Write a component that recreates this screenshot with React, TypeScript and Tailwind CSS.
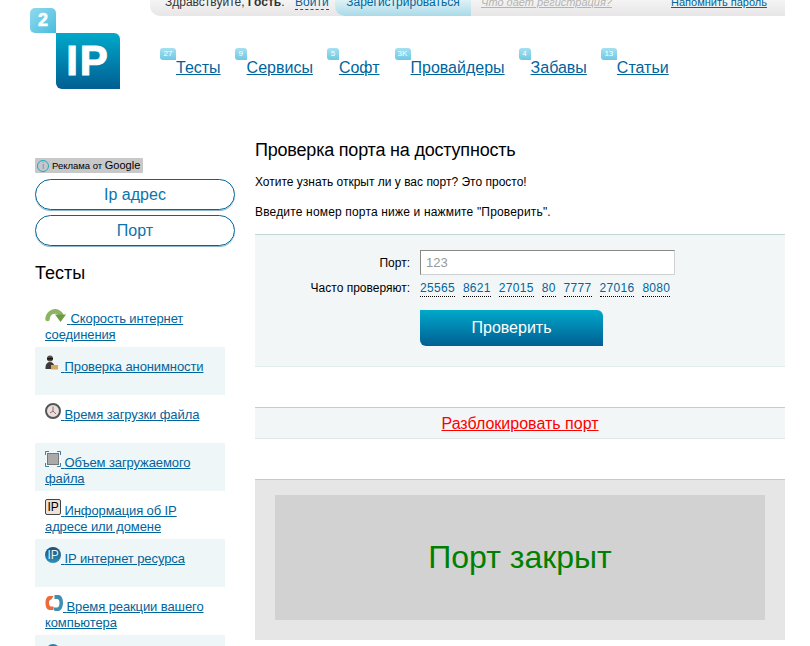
import type { ReactNode } from 'react';

const navItems = [
  { count: '27', label: 'Тесты', badge: 'w-4', extra: '' },
  { count: '9', label: 'Сервисы', badge: 'w-3', extra: '' },
  { count: '5', label: 'Софт', badge: 'w-3', extra: 'mr-px' },
  { count: '3K', label: 'Провайдеры', badge: 'w-4', extra: '' },
  { count: '4', label: 'Забавы', badge: 'w-3', extra: '' },
  { count: '13', label: 'Статьи', badge: 'w-4', extra: '' },
];

const ports = ['25565', '8621', '27015', '80', '7777', '27016', '8080'];

function ArrowIcon() {
  return (
    <svg width="22" height="16" viewBox="0 0 22 16" className="inline-block align-baseline">
      <path d="M2.5 12C3 6 10 1 16 7.5" stroke="#8db463" strokeWidth="4.5" fill="none" strokeLinecap="round" />
      <path d="M10 7.5h11l-5.5 7.5z" fill="#6f9a45" />
    </svg>
  );
}

function AgentIcon() {
  return (
    <svg width="16" height="16" viewBox="0 0 16 16" className="inline-block align-baseline">
      <circle cx="5" cy="3.5" r="3" fill="#5a4c46" />
      <rect x="2" y="3" width="6" height="1.5" fill="#111" />
      <path d="M0.5 12c0-3 2-5 4.5-5s4.5 2 4.5 5v2h-9z" fill="#3f3a38" />
      <rect x="6" y="10" width="7" height="4.5" fill="#d8a860" />
    </svg>
  );
}

function ClockIcon() {
  return (
    <svg width="16" height="16" viewBox="0 0 16 16" className="inline-block align-baseline">
      <circle cx="8" cy="8" r="7" fill="#e4e0e0" stroke="#555" strokeWidth="2" />
      <path d="M8 3.5V8l3 3M8 8l-3 2" stroke="#b06060" strokeWidth="1" fill="none" />
    </svg>
  );
}

function SizeIcon() {
  return (
    <svg width="16" height="16" viewBox="0 0 16 16" className="inline-block align-baseline">
      <rect x="2.5" y="2.5" width="11" height="11" fill="#aaa" stroke="#777" />
      <path d="M0.5 4V.5H4M12 .5h3.5V4M15.5 12v3.5H12M4 15.5H.5V12" stroke="#3f7f9f" fill="none" />
    </svg>
  );
}

function IpBoxIcon() {
  return (
    <span className="inline-block overflow-hidden w-4 h-4 align-baseline border border-[#444] rounded-[2px] bg-[#eee2d8] text-black text-[12px] leading-[14px] text-center">
      IP
    </span>
  );
}

function IpGlobeIcon() {
  return (
    <span className="inline-block overflow-hidden w-4 h-4 align-baseline rounded-full bg-gradient-to-b from-[#1c4f78] to-[#2f8fb5] text-[#dff1f6] text-[12px] leading-4 text-center">
      IP
    </span>
  );
}

function PingIcon() {
  return (
    <svg width="18" height="16" viewBox="0 0 18 16" className="inline-block align-baseline">
      <path d="M8.500 1H4.500C2 1 .5 4 .5 8s1.500 7 4 7h4v-3.500H6c-1.200 0-2-1.500-2-3.500s.8-3.500 2.500-3.500z" fill="#ee6a3a" />
      <path d="M9.500 0h4c2.500 0 4.500 3 4.500 7.500s-2 8.500-4.500 8.500h-4l-1-3.500h3.500c1.500 0 2.500-2 2.500-4.500s-1-4-2.500-4H9.500z" fill="#3f8fb0" />
    </svg>
  );
}

function GearIcon() {
  return (
    <svg width="16" height="16" viewBox="0 0 16 16" className="inline-block align-baseline">
      <circle cx="8" cy="8" r="7" fill="#2b7fa8" />
      <circle cx="8" cy="8" r="3" fill="#dff1f6" />
    </svg>
  );
}

const tests: { icon: ReactNode; label: string; tint: boolean }[] = [
  { icon: <ArrowIcon />, label: 'Скорость интернет соединения', tint: false },
  { icon: <AgentIcon />, label: 'Проверка анонимности', tint: true },
  { icon: <ClockIcon />, label: 'Время загрузки файла', tint: false },
  { icon: <SizeIcon />, label: 'Объем загружаемого файла', tint: true },
  { icon: <IpBoxIcon />, label: 'Информация об IP адресе или домене', tint: false },
  { icon: <IpGlobeIcon />, label: 'IP интернет ресурса', tint: true },
  { icon: <PingIcon />, label: 'Время реакции вашего компьютера', tint: false },
  { icon: <GearIcon />, label: '', tint: true },
];

function Logo() {
  return (
    <div className="w-[90px] pt-2 shrink-0">
      <div className="w-[26px] h-[25px] bg-gradient-to-br from-[#8fdaee] to-[#45bcdf] rounded-tl-[5px] rounded-bl-[5px] rounded-tr-[5px] text-white font-bold text-[18px] leading-[25px] text-center [-webkit-text-stroke:0.6px_white]">
        2
      </div>
      <div className="ml-[26px] w-16 h-14 bg-gradient-to-b from-[#00a9ca] to-[#005f93] rounded-tr-[6px] rounded-bl-[6px] text-white font-bold text-[42px] leading-[56px] text-center tracking-[2px] [-webkit-text-stroke:1px_white]">
        IP
      </div>
    </div>
  );
}

export default function App() {
  return (
    <div className="w-[810px] h-[646px] overflow-hidden bg-white font-['Liberation_Sans',Arial,sans-serif] text-black">
      <div className="w-[785px]">
        {/* Header */}
        <div className="flex pl-[30px] h-[134px]">
          <Logo />
          <div className="ml-[30px] flex-1">
            <div className="h-4 overflow-hidden flex bg-gradient-to-b from-[#f4f4f4] to-[#e8e6e6] rounded-bl-[10px] text-[12px] leading-[4px] whitespace-nowrap">
              <span className="ml-[15px] w-[130px] text-[#333]">
                Здравствуйте, <b>Гость</b>.
              </span>
              <span className="w-10">
                <a className="text-[#00659c] border-b border-dashed border-[#00659c]">Войти</a>
              </span>
              <span className="w-[136px] rounded-bl-[10px] bg-gradient-to-b from-[#dff1f6] to-[#a9dae8] text-[#00659c] text-center">
                Зарегистрироваться
              </span>
              <a className="ml-[10px] w-[190px] text-[11px] italic text-[#b5b3b0] underline">Что дает регистрация?</a>
              <a className="text-[11px] text-[#00659c] underline">Напомнить пароль</a>
            </div>
            <nav className="flex gap-[14px] mt-8 ml-[10px]">
              {navItems.map((item) => (
                <div key={item.label} className={`flex ${item.extra}`}>
                  <span className={`${item.badge} h-3 bg-gradient-to-b from-[#a5e0f0] to-[#6ec8e4] rounded-tl-[3px] rounded-bl-[3px] rounded-tr-[3px] text-white text-[8px] leading-3 text-center overflow-hidden`}>
                    {item.count}
                  </span>
                  <a className="mt-[10px] text-[16px] leading-[20px] text-[#00659c] underline">{item.label}</a>
                </div>
              ))}
            </nav>
          </div>
        </div>

        <div className="flex pl-[35px]">
          {/* Sidebar */}
          <aside className="w-[200px] shrink-0 pt-6">
            <div className="w-[108px] h-[15px] bg-[#c8c8c8] flex items-center gap-[3px] pl-[2px] text-[9.500px] rounded-[1px] whitespace-nowrap">
              <span className="w-3 h-3 rounded-full border border-[#1ca8c8] text-[#1ca8c8] text-[9px] leading-[10px] text-center">i</span>
              <span>
                Реклама от <span className="text-[11px]">Google</span>
              </span>
            </div>
            <a className="block mt-[6px] h-[31px] rounded-[16px] border border-[#00659c] shadow-[0_1px_0_#8fb8cc] text-center text-[16px] leading-[29px] text-[#0a74ac]">Ip адрес</a>
            <a className="block mt-[5px] h-[31px] rounded-[16px] border border-[#00659c] shadow-[0_1px_0_#8fb8cc] text-center text-[16px] leading-[29px] text-[#0a74ac]">Порт</a>
            <h3 className="mt-[16px] text-[18px] leading-[22px]">Тесты</h3>
            <ul className="mt-[15px] w-[190px]">
              {tests.map((t, i) => (
                <li key={i} className={`h-12 px-[10px] pt-2 text-[13px] leading-4 ${t.tint ? 'bg-[#eff6f8]' : ''}`}>
                  <a className="text-[#00659c] underline tracking-[-0.1px]">
                    {t.icon} {t.label}
                  </a>
                </li>
              ))}
            </ul>
          </aside>

          {/* Main */}
          <main className="ml-5 flex-1">
            <h1 className="mt-[5px] text-[18px] leading-[22px] tracking-[-0.2px]">Проверка порта на доступность</h1>
            <p className="mt-[14px] text-[12px] leading-[15px]">Хотите узнать открыт ли у вас порт? Это просто!</p>
            <p className="mt-[15px] text-[12px] leading-[15px] tracking-[0.17px]">Введите номер порта ниже и нажмите "Проверить".</p>
            <div className="mt-[14px] h-[133px] bg-[#f2f6f7] border-t border-[#c3d6da] border-b border-b-[#e2eced] pt-[15px]">
              <div className="flex items-center">
                <span className="w-[155px] text-right text-[12px]">Порт:</span>
                <input readOnly value="123" className="ml-[10px] w-[255px] h-[25px] bg-white border border-[#cfd2d3] border-t-[#888] border-l-[#888] px-[5px] text-[13px] text-[#999] outline-none" />
              </div>
              <div className="flex mt-1 text-[12px] leading-[18px]">
                <span className="w-[155px] text-right">Часто проверяют:</span>
                <div className="ml-[10px] flex gap-2">
                  {ports.map((p) => (
                    <a key={p} className="text-[#00659c] border-b border-dotted border-black tracking-[0.3px] h-[18px]">{p}</a>
                  ))}
                </div>
              </div>
              <button className="block ml-[165px] mt-[13px] w-[183px] h-9 bg-gradient-to-b from-[#00a9ca] to-[#005f93] rounded-tr-[6px] rounded-bl-[6px] text-white text-[16px]">
                Проверить
              </button>
            </div>
            <div className="mt-10 h-[32px] bg-[#f2f6f7] border-t border-[#b9d0d4] border-b border-b-[#e0e8e9] text-center text-[16px] leading-[31px]">
              <a className="text-[#ff0000] underline">Разблокировать порт</a>
            </div>
            <div className="mt-10 h-[161px] bg-[#e6e6e6] border-t border-[#c8c8c8] px-5 pt-[15px]">
              <div className="h-[125px] bg-[#d2d2d2] flex items-center justify-center pb-[2px] text-[32px] text-[#008000]">Порт закрыт</div>
            </div>
          </main>
        </div>
      </div>
    </div>
  );
}
